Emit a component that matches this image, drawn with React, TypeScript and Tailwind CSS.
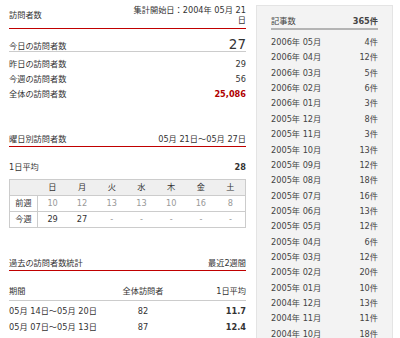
import React from 'react';

const archives: [string, string][] = [
  ['2006年 05月', '4件'],
  ['2006年 04月', '12件'],
  ['2006年 03月', '5件'],
  ['2006年 02月', '6件'],
  ['2006年 01月', '3件'],
  ['2005年 12月', '8件'],
  ['2005年 11月', '3件'],
  ['2005年 10月', '13件'],
  ['2005年 09月', '12件'],
  ['2005年 08月', '18件'],
  ['2005年 07月', '16件'],
  ['2005年 06月', '13件'],
  ['2005年 05月', '12件'],
  ['2005年 04月', '6件'],
  ['2005年 03月', '12件'],
  ['2005年 02月', '20件'],
  ['2005年 01月', '10件'],
  ['2004年 12月', '13件'],
  ['2004年 11月', '11件'],
  ['2004年 10月', '18件'],
];

const days = ['日', '月', '火', '水', '木', '金', '土'];
const lastWeek = ['10', '12', '13', '13', '10', '16', '8'];
const thisWeek = ['29', '27', '-', '-', '-', '-', '-'];

const SectionHeader = ({ title, right }: { title: string; right: string }) => (
  <div className="flex justify-between items-end border-b border-[#c00000] pb-[2px] leading-[10px]">
    <span>{title}</span>
    <span>{right}</span>
  </div>
);

const StatRow = ({ label, value, strong }: { label: string; value: string; strong?: boolean }) => (
  <div className="flex justify-between h-[15px] leading-[15px]">
    <span>{label}</span>
    <span className={strong ? 'font-bold text-[#b00000]' : ''}>{value}</span>
  </div>
);

export default function App() {
  return (
    <div className="w-[400px] h-[338px] overflow-hidden bg-white flex text-[8.2px] text-[#333] font-['DejaVu_Sans','Noto_Sans_CJK_JP',sans-serif]">
      {/* main column */}
      <div className="ml-[9px] w-[237px] pt-[5px] flex flex-col">
        <div className="flex justify-between items-center border-b border-[#c00000] pb-[3px]">
          <span>訪問者数</span>
          <span className="text-right leading-[10px]">
            集計開始日：2004年 05月 21
            <br />
            日
          </span>
        </div>

        <div className="mt-[8px] flex justify-between items-baseline border-b border-[#ccc]">
          <span className="leading-[10px]">今日の訪問者数</span>
          <span className="text-[13.5px] leading-[14px]">27</span>
        </div>

        <div className="mt-[5px]">
          <StatRow label="昨日の訪問者数" value="29" />
          <StatRow label="今週の訪問者数" value="56" />
          <StatRow label="全体の訪問者数" value="25,086" strong />
        </div>

        <div className="mt-[32px]">
          <SectionHeader title="曜日別訪問者数" right="05月 21日〜05月 27日" />
        </div>

        <div className="mt-[15px] flex justify-between leading-[10px]">
          <span>1日平均</span>
          <span className="font-bold">28</span>
        </div>

        <table className="mt-[7px] w-full border-collapse border border-[#ccc] table-fixed">
          <tbody>
            <tr className="bg-[#efefef] h-[16px]">
              <td className="w-[28px]" />
              {days.map((d) => (
                <td key={d} className="text-center p-0">{d}</td>
              ))}
            </tr>
            <tr className="h-[16px] border-t border-[#ccc]">
              <td className="border-r border-[#ccc] text-center p-0">前週</td>
              {lastWeek.map((v, i) => (
                <td key={i} className="text-center text-[#999] p-0">{v}</td>
              ))}
            </tr>
            <tr className="h-[16px] border-t border-[#ccc]">
              <td className="border-r border-[#ccc] text-center p-0">今週</td>
              {thisWeek.map((v, i) => (
                <td key={i} className={`text-center p-0 ${v === '-' ? 'text-[#999]' : ''}`}>{v}</td>
              ))}
            </tr>
          </tbody>
        </table>

        <div className="mt-[30px]">
          <SectionHeader title="過去の訪問者数統計" right="最近2週間" />
        </div>

        <div className="mt-[15px] grid grid-cols-[100px_68px_1fr] leading-[10px] border-b border-[#ccc] pb-[4px]">
          <span>期間</span>
          <span className="text-center">全体訪問者</span>
          <span className="text-right">1日平均</span>
        </div>
        <div className="mt-[2px]">
          <div className="grid grid-cols-[100px_68px_1fr] leading-[16px]">
            <span>05月 14日〜05月 20日</span>
            <span className="text-center">82</span>
            <span className="text-right font-bold">11.7</span>
          </div>
          <div className="grid grid-cols-[100px_68px_1fr] leading-[16px]">
            <span>05月 07日〜05月 13日</span>
            <span className="text-center">87</span>
            <span className="text-right font-bold">12.4</span>
          </div>
        </div>
      </div>

      {/* archive sidebar */}
      <div className="ml-[10px] mt-[5px] w-[137px] h-[360px] shrink-0 bg-[#f3f3f3] border border-[#e4e4e4] px-[14px] pt-[7px] text-[#444]">
        <div className="flex justify-between h-[17px] leading-[16px] border-b-2 border-[#b4b4b4]">
          <span>記事数</span>
          <span className="font-bold">365件</span>
        </div>
        <div className="mt-[5px]">
          {archives.map(([m, c]) => (
            <div key={m} className="flex justify-between h-[15.37px] leading-[15.37px]">
              <span>{m}</span>
              <span>{c}</span>
            </div>
          ))}
        </div>
      </div>
    </div>
  );
}
